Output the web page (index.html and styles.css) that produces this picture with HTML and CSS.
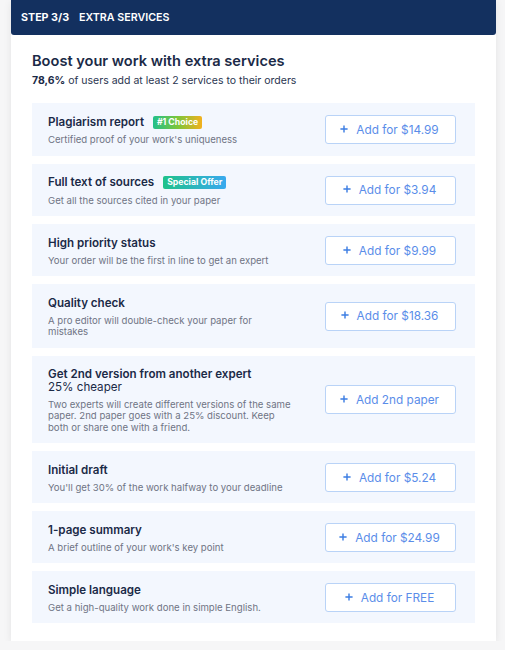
FILE: index.html
```html
<!DOCTYPE html>
<html lang="en">
<head>
<meta charset="utf-8">
<title>Extra services</title>
<link rel="stylesheet" href="styles.css">
</head>
<body>
<div class="card">
  <div class="header">
    <span class="step">STEP 3/3</span>
    <span class="step-name">EXTRA SERVICES</span>
  </div>
  <div class="intro">
    <h1 class="title">Boost your work with extra services</h1>
    <p class="subtitle"><b>78,6%</b> of users add at least 2 services to their orders</p>
  </div>
  <div class="list">
    <div class="row">
      <div class="info">
        <div class="name">Plagiarism report <span class="badge badge-choice">#1 Choice</span></div>
        <div class="desc">Certified proof of your work's uniqueness</div>
      </div>
      <button class="add"><svg class="plus" viewBox="0 0 10 10"><path d="M5 0.5V9.5M0.5 5H9.5"/></svg>Add for $14.99</button>
    </div>
    <div class="row">
      <div class="info">
        <div class="name">Full text of sources <span class="badge badge-offer">Special Offer</span></div>
        <div class="desc">Get all the sources cited in your paper</div>
      </div>
      <button class="add"><svg class="plus" viewBox="0 0 10 10"><path d="M5 0.5V9.5M0.5 5H9.5"/></svg>Add for $3.94</button>
    </div>
    <div class="row">
      <div class="info">
        <div class="name">High priority status</div>
        <div class="desc">Your order will be the first in line to get an expert</div>
      </div>
      <button class="add"><svg class="plus" viewBox="0 0 10 10"><path d="M5 0.5V9.5M0.5 5H9.5"/></svg>Add for $9.99</button>
    </div>
    <div class="row">
      <div class="info">
        <div class="name">Quality check</div>
        <div class="desc">A pro editor will double-check your paper for mistakes</div>
      </div>
      <button class="add"><svg class="plus" viewBox="0 0 10 10"><path d="M5 0.5V9.5M0.5 5H9.5"/></svg>Add for $18.36</button>
    </div>
    <div class="row">
      <div class="info">
        <div class="name">Get 2nd version from another expert<br><span class="name-light">25% cheaper</span></div>
        <div class="desc">Two experts will create different versions of the same paper. 2nd paper goes with a 25% discount. Keep both or share one with a friend.</div>
      </div>
      <button class="add"><svg class="plus" viewBox="0 0 10 10"><path d="M5 0.5V9.5M0.5 5H9.5"/></svg>Add 2nd paper</button>
    </div>
    <div class="row">
      <div class="info">
        <div class="name">Initial draft</div>
        <div class="desc">You'll get 30% of the work halfway to your deadline</div>
      </div>
      <button class="add"><svg class="plus" viewBox="0 0 10 10"><path d="M5 0.5V9.5M0.5 5H9.5"/></svg>Add for $5.24</button>
    </div>
    <div class="row">
      <div class="info">
        <div class="name">1-page summary</div>
        <div class="desc">A brief outline of your work's key point</div>
      </div>
      <button class="add"><svg class="plus" viewBox="0 0 10 10"><path d="M5 0.5V9.5M0.5 5H9.5"/></svg>Add for $24.99</button>
    </div>
    <div class="row">
      <div class="info">
        <div class="name">Simple language</div>
        <div class="desc">Get a high-quality work done in simple English.</div>
      </div>
      <button class="add"><svg class="plus" viewBox="0 0 10 10"><path d="M5 0.5V9.5M0.5 5H9.5"/></svg>Add for FREE</button>
    </div>
  </div>
</div>
</body>
</html>
```

FILE: styles.css
```css
* {
  box-sizing: border-box;
}

body {
  margin: 0;
  background: #f6f6f7;
  font-family: Inter, "Noto Sans", sans-serif;
  color: #1b2a47;
}

.card {
  width: 485px;
  margin-left: 11px;
  background: #ffffff;
  box-shadow: 0 2px 8px rgba(0, 0, 0, 0.08);
  padding-bottom: 18px;
}

.header {
  height: 35px;
  background: #13305f;
  border-radius: 0 0 3px 3px;
  display: flex;
  align-items: center;
  gap: 10px;
  padding: 0 10px;
  color: #ffffff;
  font-size: 10.7px;
  font-weight: 600;
}

.step {
  font-weight: 700;
}

.intro {
  padding: 16px 21px 15px;
}

.title {
  margin: 0;
  font-size: 14.6px;
  line-height: 20px;
  font-weight: 600;
  color: #1b2a47;
}

.subtitle {
  margin: 3px 0 0;
  font-size: 10.5px;
  line-height: 14px;
  color: #2a3550;
}

.subtitle b {
  font-weight: 700;
  color: #1b2a47;
}

.list {
  padding: 0 21px;
  display: flex;
  flex-direction: column;
  gap: 8px;
}

.row {
  background: #f3f7fe;
  display: flex;
  align-items: center;
  padding: 12.5px 19px 10px 16px;
  gap: 20px;
}

.info {
  flex: 1;
  min-width: 0;
}

.name {
  font-size: 11.6px;
  line-height: 12.5px;
  font-weight: 600;
  color: #1b2a47;
}

.name-light {
  font-weight: 400;
}

.badge {
  display: inline-block;
  margin-left: 6px;
  padding: 0 4px;
  height: 13px;
  line-height: 13px;
  border-radius: 2px;
  color: #ffffff;
  font-size: 8.7px;
  font-weight: 700;
  vertical-align: top;
}

.badge-choice {
  background: linear-gradient(90deg, #21c08b 0%, #7cc63a 50%, #f2b01e 100%);
}

.badge-offer {
  background: linear-gradient(90deg, #1fc28a 0%, #39a9ef 100%);
}

.desc {
  margin-top: 5.5px;
  font-size: 9.6px;
  line-height: 11.5px;
  color: #6f7484;
  max-width: 245px;
}

.add {
  flex: none;
  width: 131px;
  height: 29px;
  display: flex;
  align-items: center;
  justify-content: center;
  gap: 8px;
  background: #ffffff;
  border: 1px solid #b9d3f7;
  border-radius: 3px;
  color: #5a8de9;
  font-family: inherit;
  font-size: 11.8px;
  padding: 0 2px 0 0;
  margin-top: -1.5px;
}

.plus {
  width: 8px;
  height: 8px;
  fill: none;
  stroke: #3d7ee3;
  stroke-width: 1.8;
  margin-top: -2px;
}
```
